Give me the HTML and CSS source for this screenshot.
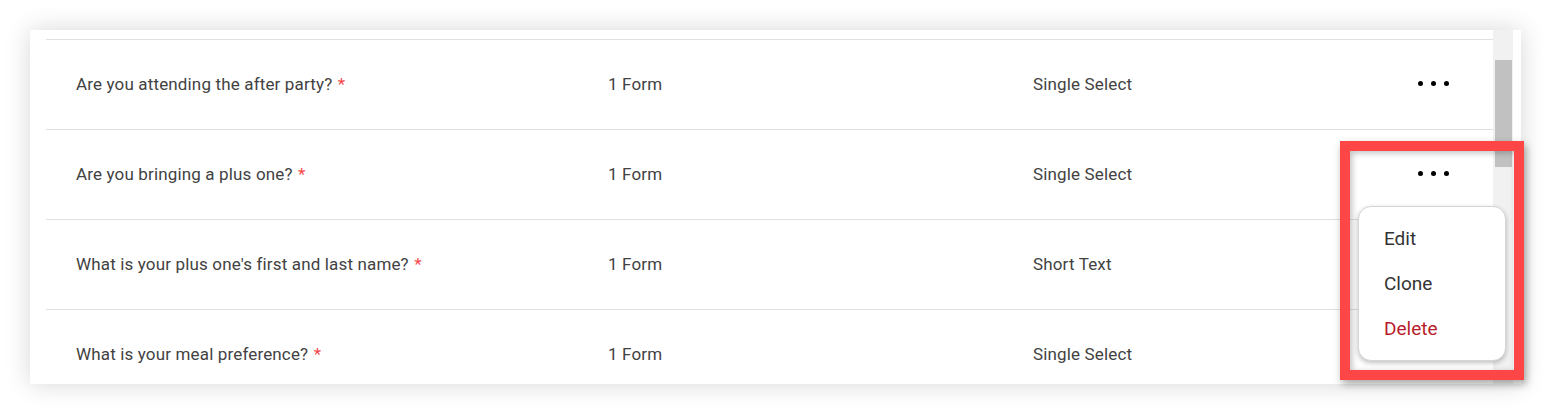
FILE: index.html
```html
<!DOCTYPE html>
<html>
<head>
<meta charset="utf-8">
<link rel="stylesheet" href="styles.css">
</head>
<body>
<div class="panel">
  <div class="list">
    <div class="row">
      <div class="q">Are you attending the after party? <span class="req">*</span></div>
      <div class="c">1 Form</div>
      <div class="c">Single Select</div>
      <div class="more"><span></span><span></span><span></span></div>
    </div>
    <div class="row">
      <div class="q">Are you bringing a plus one? <span class="req">*</span></div>
      <div class="c">1 Form</div>
      <div class="c">Single Select</div>
      <div class="more"><span></span><span></span><span></span></div>
    </div>
    <div class="row">
      <div class="q">What is your plus one's first and last name? <span class="req">*</span></div>
      <div class="c">1 Form</div>
      <div class="c">Short Text</div>
      <div class="more"></div>
    </div>
    <div class="row">
      <div class="q">What is your meal preference? <span class="req">*</span></div>
      <div class="c">1 Form</div>
      <div class="c">Single Select</div>
      <div class="more"></div>
    </div>
  </div>
  <div class="scrollbar"><div class="thumb"></div></div>
</div>
<div class="highlight"></div>
<div class="menu">
  <div class="item">Edit</div>
  <div class="item">Clone</div>
  <div class="item danger">Delete</div>
</div>
</body>
</html>
```
FILE: styles.css
```css
html, body {
  margin: 0;
  padding: 0;
  background: #ffffff;
  font-family: Roboto, "Liberation Sans", sans-serif;
}
body {
  width: 1551px;
  height: 415px;
  overflow: hidden;
  position: relative;
}
.panel {
  margin: 30px 0 0 30px;
  width: 1483px;
  height: 354px;
  padding-right: 8px;
  background: #ffffff;
  box-shadow: 0 0 24px rgba(0, 0, 0, 0.16);
  display: flex;
  overflow: hidden;
}
.list {
  flex: 1;
  padding-left: 16px;
  padding-top: 9px;
  overflow: hidden;
}
.row {
  box-sizing: border-box;
  height: 90px;
  padding-bottom: 2px;
  border-top: 1px solid #e0e0e0;
  display: grid;
  grid-template-columns: 532px 425px 1fr 120px;
  align-items: center;
  padding-left: 30px;
  font-size: 17px;
  letter-spacing: 0.15px;
  color: #424242;
}
.req {
  color: #f4484b;
  margin-left: 1px;
}
.more {
  display: flex;
  justify-content: center;
  gap: 8px;
}
.more span {
  width: 5px;
  height: 5px;
  border-radius: 50%;
  background: #000;
}
.scrollbar {
  width: 20px;
  background: #f1f1f1;
  position: relative;
}
.thumb {
  margin: 30px 1px 0 2px;
  height: 107px;
  background: #c1c1c1;
}
.highlight {
  position: absolute;
  left: 1340px;
  top: 141px;
  width: 164px;
  height: 219px;
  border: 10px solid #ff4646;
  box-shadow: 2px 4px 8px rgba(0, 0, 0, 0.35), inset 2px 2px 6px rgba(0, 0, 0, 0.25);
}
.menu {
  position: absolute;
  left: 1358px;
  top: 206px;
  width: 148px;
  height: 155px;
  box-sizing: border-box;
  padding-top: 9px;
  background: #ffffff;
  border: 1px solid #d6d6d6;
  border-radius: 13px;
  box-shadow: 0 2px 5px rgba(0, 0, 0, 0.25);
}
.item {
  height: 45px;
  line-height: 45px;
  padding-left: 25px;
  font-size: 19px;
  color: #333333;
}
.item.danger {
  color: #b81c2a;
}
```
